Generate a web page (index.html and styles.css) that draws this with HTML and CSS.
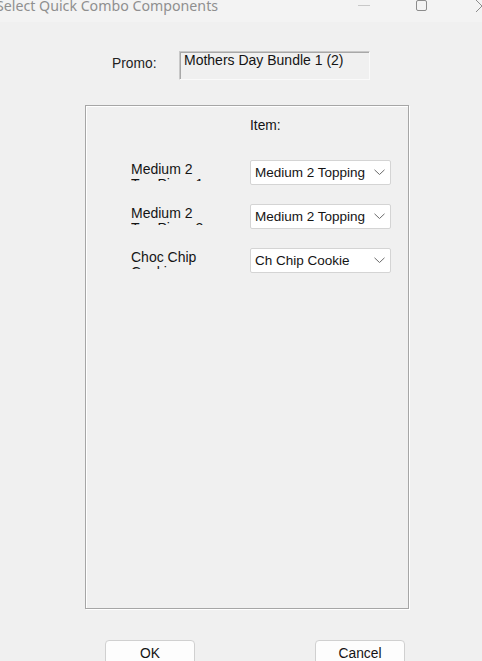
FILE: index.html
```html
<!DOCTYPE html>
<html>
<head>
<meta charset="utf-8">
<link rel="stylesheet" href="styles.css">
</head>
<body>
<div class="window">
  <div class="titlebar">
    <span class="title">Select Quick Combo Components</span>
    <div class="controls">
      <svg class="ctl min" width="14" height="12" viewBox="0 0 14 12"><line x1="1" y1="5.5" x2="13" y2="5.5" stroke="#c8c8c8" stroke-width="1"/></svg>
      <svg class="ctl max" width="14" height="12" viewBox="0 0 14 12"><rect x="1.5" y="0.5" width="10" height="10" rx="1.5" fill="none" stroke="#8c8c8c" stroke-width="1"/></svg>
      <svg class="ctl close" width="10" height="12" viewBox="0 0 10 12"><line x1="1" y1="0" x2="7" y2="6" stroke="#8c8c8c" stroke-width="1"/><line x1="1" y1="12" x2="7" y2="6" stroke="#8c8c8c" stroke-width="1"/></svg>
    </div>
  </div>
  <div class="content">
    <div class="promo-row">
      <span class="promo-label">Promo:</span>
      <div class="promo-box">Mothers Day Bundle 1 (2)</div>
    </div>
    <div class="group">
      <div class="item-head">Item:</div>
      <div class="rows">
        <div class="row">
          <div class="row-label">Medium 2 Top Pizza 1</div>
          <div class="combo"><span>Medium 2 Topping</span><svg class="chev" width="11" height="7" viewBox="0 0 11 7"><polyline points="0.5,0.8 5.5,5.5 10.5,0.8" fill="none" stroke="#6a6a6a" stroke-width="1"/></svg></div>
        </div>
        <div class="row">
          <div class="row-label">Medium 2 Top Pizza 2</div>
          <div class="combo"><span>Medium 2 Topping</span><svg class="chev" width="11" height="7" viewBox="0 0 11 7"><polyline points="0.5,0.8 5.5,5.5 10.5,0.8" fill="none" stroke="#6a6a6a" stroke-width="1"/></svg></div>
        </div>
        <div class="row">
          <div class="row-label">Choc Chip Cookie</div>
          <div class="combo"><span>Ch Chip Cookie</span><svg class="chev" width="11" height="7" viewBox="0 0 11 7"><polyline points="0.5,0.8 5.5,5.5 10.5,0.8" fill="none" stroke="#6a6a6a" stroke-width="1"/></svg></div>
        </div>
      </div>
    </div>
    <div class="buttons">
      <div class="btn ok">OK</div>
      <div class="btn cancel">Cancel</div>
    </div>
  </div>
</div>
</body>
</html>
```
FILE: styles.css
```css
html, body {
  margin: 0;
  padding: 0;
  background: #f0f0f0;
  overflow: hidden;
}
.window {
  width: 482px;
  height: 661px;
  overflow: hidden;
  font-family: "Liberation Sans", Arial, sans-serif;
  font-size: 13.8px;
  color: #141414;
}
.titlebar {
  height: 22px;
  background: #f3f3f3;
  display: flex;
  align-items: flex-start;
}
.title {
  margin-left: -4px;
  margin-top: -4px;
  font-family: "Noto Sans", "Open Sans", sans-serif;
  font-size: 14.2px;
  color: #8f8f8f;
  white-space: nowrap;
}
.controls {
  margin-left: auto;
  display: flex;
  align-items: flex-start;
}
.ctl { display: block; }
.min { margin-right: 44px; }
.max { margin-right: 46px; }
.close { margin-right: -3px; }
.content {
  display: flex;
  flex-direction: column;
}
.promo-row {
  display: flex;
  align-items: flex-start;
  margin-top: 29px;
}
.promo-label {
  margin-left: 112px;
  margin-top: 5px;
  width: 67px;
  color: #222;
}
.promo-box {
  border: 1px solid #c8c8c8;
  border-right-color: #fafafa;
  border-bottom-color: #fafafa;
  box-shadow: inset 1px 1px 0 #a8a8a8;
  padding: 1px 0 0 4px;
  box-sizing: border-box;
  width: 191px;
  height: 29px;
  line-height: 15px;
  font-size: 14px;
  white-space: nowrap;
}
.group {
  margin-left: 85px;
  margin-top: 25px;
  width: 324px;
  height: 504px;
  box-sizing: border-box;
  border: 1px solid #a6a6a6;
  box-shadow: inset 1px 1px 0 #ffffff, 1px 1px 0 #ffffff;
  display: flex;
  flex-direction: column;
}
.item-head {
  margin-left: 164px;
  margin-top: 12px;
  line-height: 15px;
}
.rows {
  display: flex;
  flex-direction: column;
  gap: 19px;
  margin-top: 27px;
}
.row {
  display: flex;
  align-items: flex-start;
}
.row-label {
  margin-left: 45px;
  width: 74px;
  height: 21px;
  overflow: hidden;
  line-height: 15px;
  padding-top: 2px;
  box-sizing: border-box;
  font-size: 14px;
}
.combo {
  margin-left: 45px;
  width: 141px;
  height: 25px;
  box-sizing: border-box;
  background: #ffffff;
  border: 1px solid #d4d4d4;
  border-radius: 2px;
  display: flex;
  align-items: center;
  padding-left: 4px;
  padding-right: 5px;
  font-size: 13.5px;
}
.combo span { flex: 1; white-space: nowrap; }
.chev { display: block; }
.buttons {
  display: flex;
  margin-top: 31px;
}
.btn {
  width: 90px;
  height: 30px;
  box-sizing: border-box;
  background: #fdfdfd;
  border: 1px solid #d0d0d0;
  border-radius: 4px;
  text-align: center;
  line-height: 26px;
}
.ok { margin-left: 105px; }
.cancel { margin-left: 120px; }
```
